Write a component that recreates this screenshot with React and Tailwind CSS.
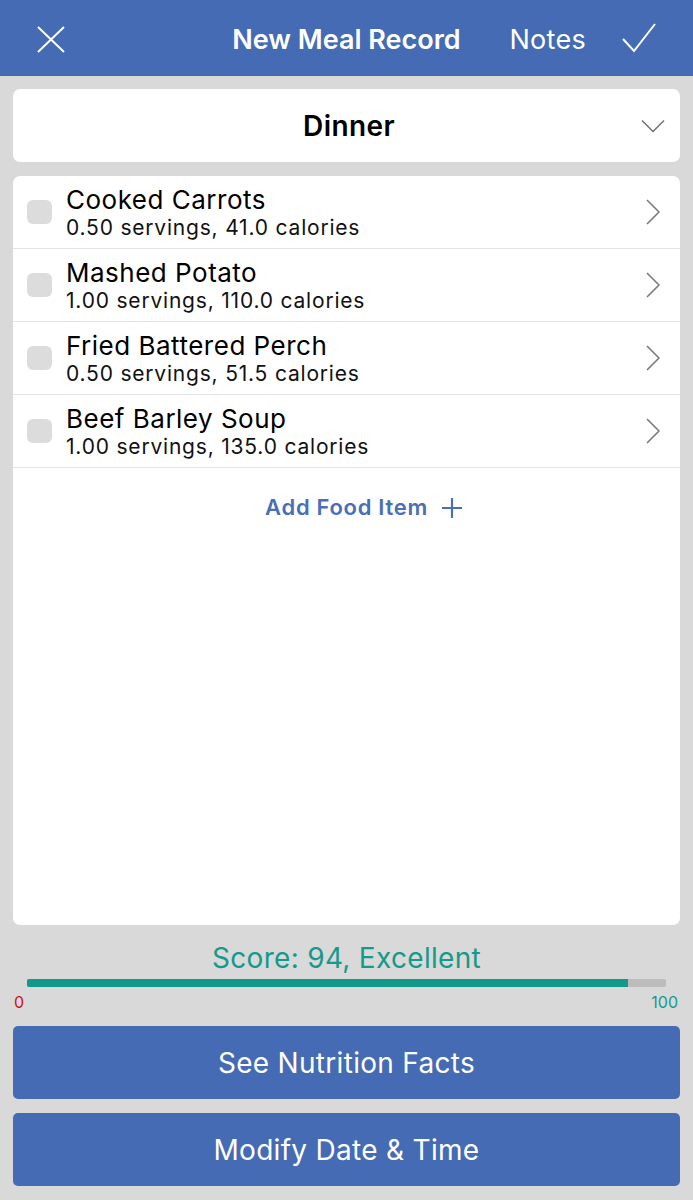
import { Fragment } from "react";

const foods = [
  { name: "Cooked Carrots", detail: "0.50 servings, 41.0 calories" },
  { name: "Mashed Potato", detail: "1.00 servings, 110.0 calories" },
  { name: "Fried Battered Perch", detail: "0.50 servings, 51.5 calories" },
  { name: "Beef Barley Soup", detail: "1.00 servings, 135.0 calories" },
];

const score = 94;

function FoodRow({ food }) {
  return (
    <div className="flex h-[73px] items-center border-b border-[#e3e3e3]">
      <div className="ml-[14px] h-[24px] w-[25px] shrink-0 rounded-[6px] bg-[#dcdcdc]" />
      <div className="ml-[14px] flex-1 pt-[4px]">
        <div className="text-[26px] leading-[28px] tracking-[0.5px] text-black">{food.name}</div>
        <div className="text-[21px] leading-[28px] tracking-[0.8px] text-[#111]">{food.detail}</div>
      </div>
      <svg className="mr-[18px] h-[28px] w-[18px]" viewBox="0 0 18 28" fill="none">
        <path d="M3 2 L15 14 L3 26" stroke="#7a7a7a" strokeWidth="1.6" strokeLinejoin="round" />
      </svg>
    </div>
  );
}

export default function App() {
  return (
    <div className="flex h-[1200px] w-[693px] flex-col bg-[#d9d9d9] font-['Inter',_'Liberation_Sans',_sans-serif]">
      {/* Top bar */}
      <header className="grid h-[76px] shrink-0 grid-cols-[1fr_auto_1fr] items-center bg-[#446bb3] text-white">
        <div className="pl-[37px] pt-[2px]">
          <svg className="h-[27px] w-[28px]" viewBox="0 0 28 27" fill="none">
            <path d="M1 1 L27 26 M27 1 L1 26" stroke="white" strokeWidth="2" />
          </svg>
        </div>
        <h1 className="pt-[5px] text-[27px] font-semibold">New Meal Record</h1>
        <div className="flex items-center justify-end gap-[36px] pr-[37px]">
          <span className="pt-[5px] text-[27px] tracking-[0.3px]">Notes</span>
          <svg className="h-[30px] w-[34px]" viewBox="0 0 34 30" fill="none">
            <path d="M1 16 L12 28 L33 1" stroke="white" strokeWidth="2" />
          </svg>
        </div>
      </header>

      <main className="flex flex-1 flex-col px-[13px] pb-[14px]">
        {/* Meal picker */}
        <div className="mt-[13px] flex h-[73px] items-center rounded-[7px] bg-white">
          <div className="w-[44px]" />
          <div className="flex-1 text-center text-[28px] font-semibold tracking-[0.4px] text-black">Dinner</div>
          <svg className="mr-[15px] h-[14px] w-[24px]" viewBox="0 0 24 14" fill="none">
            <path d="M1 1.5 L12 12.5 L23 1.5" stroke="#6f6f6f" strokeWidth="1.5" />
          </svg>
        </div>

        {/* Food list */}
        <div className="mt-[14px] flex flex-1 flex-col rounded-[7px] bg-white">
          {foods.map((food) => (
            <Fragment key={food.name}>
              <FoodRow food={food} />
            </Fragment>
          ))}
          <div className="grid h-[79px] grid-cols-[1fr_auto_1fr] items-center text-[#4a6fb5]">
            <div />
            <span className="text-[22px] font-semibold tracking-[0.7px]">Add Food Item</span>
            <svg className="ml-[13px] h-[22px] w-[22px]" viewBox="0 0 22 22" fill="none">
              <path d="M11 1 V21 M1 11 H21" stroke="#4a6fb5" strokeWidth="2.2" />
            </svg>
          </div>
        </div>

        {/* Score */}
        <div className="mt-[16px] text-center text-[28px] leading-[34px] tracking-[0.3px] text-[#15998a]">
          Score: {score}, Excellent
        </div>
        <div className="mx-[14px] mt-[4px] h-[8px] rounded-[2px] bg-[#bcbcbc]">
          <div className="h-full rounded-l-[2px] bg-[#13998a]" style={{ width: `${score}%` }} />
        </div>
        <div className="mt-[6px] flex justify-between text-[16px] leading-[18px]">
          <span className="pl-[1px] text-[#d0101b]">0</span>
          <span className="pr-[2px] text-[#15998a]">100</span>
        </div>

        {/* Actions */}
        <button className="mt-[15px] h-[73px] rounded-[5px] bg-[#446bb3] text-[28px] tracking-[0.3px] text-white">
          See Nutrition Facts
        </button>
        <button className="mt-[14px] h-[73px] rounded-[5px] bg-[#446bb3] text-[28px] tracking-[0.3px] text-white">
          Modify Date &amp; Time
        </button>
      </main>
    </div>
  );
}
